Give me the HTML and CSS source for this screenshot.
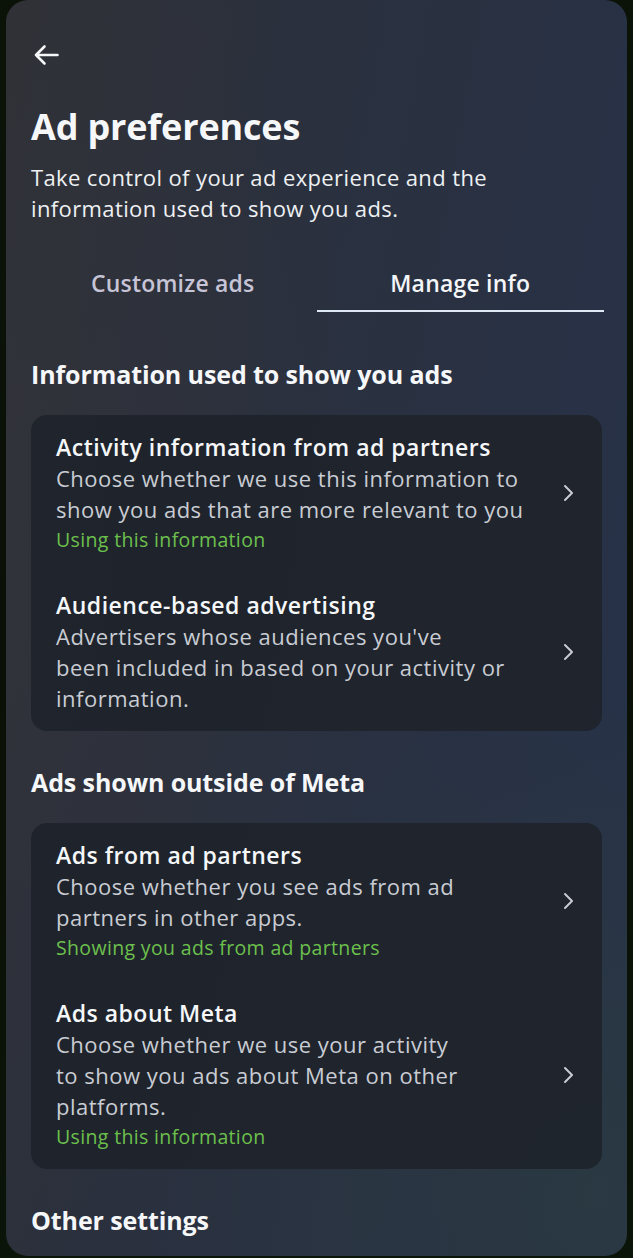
FILE: index.html
```html
<!DOCTYPE html>
<html lang="en">
<head>
<meta charset="utf-8">
<title>Ad preferences</title>
<link rel="stylesheet" href="styles.css">
</head>
<body>
<div class="frame">
  <main class="panel">
    <div class="back">
      <svg width="26" height="22" viewBox="0 0 26 22" aria-hidden="true"><path d="M24.5 11H3M11.5 2.5L3 11l8.5 8.5" fill="none" stroke="#f4f6f8" stroke-width="2.6" stroke-linecap="round" stroke-linejoin="round"/></svg>
    </div>
    <h1 class="title">Ad preferences</h1>
    <p class="subtitle">Take control of your ad experience and the<br>information used to show you ads.</p>

    <nav class="tabs">
      <div class="tab">Customize ads</div>
      <div class="tab active">Manage info</div>
    </nav>

    <h2 class="section">Information used to show you ads</h2>
    <div class="card">
      <div class="item">
        <div class="text">
          <div class="item-title">Activity information from ad partners</div>
          <div class="desc">Choose whether we use this information to<br>show you ads that are more relevant to you</div>
          <div class="status">Using this information</div>
        </div>
        <svg class="chev" width="12" height="18" viewBox="0 0 12 18" aria-hidden="true"><path d="M3 2l7 7-7 7" fill="none" stroke="#c9ccd3" stroke-width="2" stroke-linecap="round" stroke-linejoin="round"/></svg>
      </div>
      <div class="item">
        <div class="text">
          <div class="item-title">Audience-based advertising</div>
          <div class="desc">Advertisers whose audiences you've<br>been included in based on your activity or<br>information.</div>
        </div>
        <svg class="chev" width="12" height="18" viewBox="0 0 12 18" aria-hidden="true"><path d="M3 2l7 7-7 7" fill="none" stroke="#c9ccd3" stroke-width="2" stroke-linecap="round" stroke-linejoin="round"/></svg>
      </div>
    </div>

    <h2 class="section second">Ads shown outside of Meta</h2>
    <div class="card">
      <div class="item">
        <div class="text">
          <div class="item-title">Ads from ad partners</div>
          <div class="desc">Choose whether you see ads from ad<br>partners in other apps.</div>
          <div class="status">Showing you ads from ad partners</div>
        </div>
        <svg class="chev" width="12" height="18" viewBox="0 0 12 18" aria-hidden="true"><path d="M3 2l7 7-7 7" fill="none" stroke="#c9ccd3" stroke-width="2" stroke-linecap="round" stroke-linejoin="round"/></svg>
      </div>
      <div class="item">
        <div class="text">
          <div class="item-title">Ads about Meta</div>
          <div class="desc">Choose whether we use your activity<br>to show you ads about Meta on other<br>platforms.</div>
          <div class="status">Using this information</div>
        </div>
        <svg class="chev" width="12" height="18" viewBox="0 0 12 18" aria-hidden="true"><path d="M3 2l7 7-7 7" fill="none" stroke="#c9ccd3" stroke-width="2" stroke-linecap="round" stroke-linejoin="round"/></svg>
      </div>
    </div>

    <h2 class="section second">Other settings</h2>
  </main>
</div>
</body>
</html>
```

FILE: styles.css
```css
html, body {
  margin: 0;
  padding: 0;
  background: #0a1206;
}

body {
  font-family: "Open Sans", "Noto Sans", "Liberation Sans", sans-serif;
  color: #f4f6f8;
  width: 633px;
  height: 1258px;
  overflow: hidden;
}

.frame {
  padding: 0 6px;
  height: 1258px;
  box-sizing: border-box;
  background: linear-gradient(180deg, #0b1308 0%, #0a1005 50%, #0b1409 100%);
}

.panel {
  height: 1256px;
  box-sizing: border-box;
  border-radius: 22px;
  padding: 43px 25px 0 25px;
  background:
    radial-gradient(ellipse 70% 40% at 95% 95%, rgba(44, 62, 60, 0.55) 0%, rgba(44, 62, 60, 0) 100%),
    radial-gradient(ellipse 60% 60% at 0% 45%, rgba(52, 52, 60, 0.55) 0%, rgba(52, 52, 60, 0) 100%),
    linear-gradient(100deg, #2f3136 0%, #2a303d 35%, #27324a 100%);
  overflow: hidden;
}

.back {
  height: 24px;
  display: flex;
  align-items: center;
  padding-left: 2px;
}

.title {
  margin: 40px 0 0;
  font-size: 36px;
  line-height: 40px;
  font-weight: 700;
  letter-spacing: -0.17px;
  color: #f6f7f9;
}

.subtitle {
  margin: 15px 0 0;
  font-size: 22px;
  line-height: 31px;
  letter-spacing: 0.38px;
  color: #eef0f3;
}

.tabs {
  display: flex;
  margin: 45px -2px 0;
}

.tab {
  flex: 1;
  text-align: center;
  font-size: 23px;
  line-height: 28px;
  font-weight: 600;
  letter-spacing: 0.2px;
  padding-bottom: 13px;
  color: #c6c4d6;
  border-bottom: 2px solid transparent;
}

.tab.active {
  color: #f3f5f8;
  border-bottom-color: #dde8f4;
}

.section {
  margin: 47px 0 26px;
  font-size: 25px;
  line-height: 30px;
  font-weight: 700;
  letter-spacing: -0.1px;
  color: #f5f7f9;
}

.section.second {
  margin-top: 36px;
  margin-bottom: 26px;
}

.card {
  background: rgba(30, 34, 42, 0.88);
  border-radius: 16px;
  padding: 16px 0 17px;
}

.item {
  display: flex;
  align-items: center;
  padding: 17px 25px;
}

.item:first-child {
  padding-top: 0;
}

.item:last-child {
  padding-bottom: 0;
}

.text {
  flex: 1;
}

.item-title {
  font-size: 23px;
  line-height: 32px;
  font-weight: 600;
  letter-spacing: 0.5px;
  color: #f5f7f9;
}

.desc {
  font-size: 22px;
  line-height: 31px;
  letter-spacing: 0.5px;
  color: #c9ccd3;
}

.status {
  font-size: 19.5px;
  line-height: 30px;
  font-weight: 400;
  letter-spacing: 0.35px;
  color: #6cc04c;
}

.chev {
  flex: none;
  margin-right: 3px;
}
```
